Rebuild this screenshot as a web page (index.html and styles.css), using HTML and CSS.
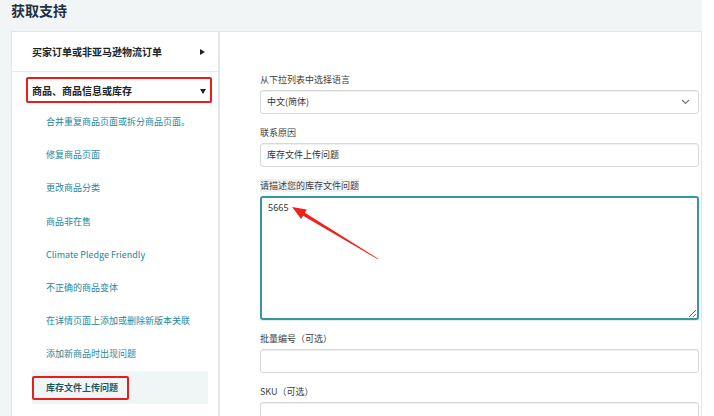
FILE: index.html
```html
<!DOCTYPE html>
<html lang="zh-CN">
<head>
<meta charset="utf-8">
<title>获取支持</title>
<link rel="stylesheet" href="styles.css">
</head>
<body>
<div class="page">
  <h1 class="title">获取支持</h1>
  <div class="main">
    <nav class="side">
      <div class="sec sec-closed"><span>买家订单或非亚马逊物流订单</span><span class="tri-right"></span></div>
      <div class="sec sec-open"><span>商品、商品信息或库存</span><span class="tri-down"></span></div>
      <ul class="sub">
        <li>合并重复商品页面或拆分商品页面。</li>
        <li>修复商品页面</li>
        <li>更改商品分类</li>
        <li>商品非在售</li>
        <li>Climate Pledge Friendly</li>
        <li>不正确的商品变体</li>
        <li>在详情页面上添加或删除新版本关联</li>
        <li>添加新商品时出现问题</li>
        <li class="active">库存文件上传问题</li>
      </ul>
    </nav>
    <section class="form">
      <div class="field">
        <div class="label">从下拉列表中选择语言</div>
        <div class="box select"><span>中文(简体)</span>
          <svg class="chev" width="9" height="6" viewBox="0 0 9 6"><path d="M1 1 L4.5 4.5 L8 1" fill="none" stroke="#6f7373" stroke-width="1.1"/></svg>
        </div>
      </div>
      <div class="field">
        <div class="label">联系原因</div>
        <div class="box">库存文件上传问题</div>
      </div>
      <div class="field">
        <div class="label label-hl"><span>请描述您的库存文件问题</span></div>
        <textarea class="area" readonly>5665</textarea>
      </div>
      <div class="field">
        <div class="label">批量编号（可选）</div>
        <div class="box"></div>
      </div>
      <div class="field">
        <div class="label">SKU（可选）</div>
        <div class="box"></div>
      </div>
    </section>
  </div>
  <div class="mark mark-1"></div>
  <div class="mark mark-2"></div>
  <svg class="arrow" width="714" height="416" viewBox="0 0 714 416">
    <polygon fill="#f0201c" points="292,207 306.8,209.5 304.9,212.7 378.2,258.7 377.8,259.3 303.1,215.7 301.2,218.9"/>
  </svg>
</div>
</body>
</html>
```

FILE: styles.css
```css
* { box-sizing: border-box; }

html, body {
  margin: 0;
  padding: 0;
  background: #ffffff;
}

body {
  font-family: "Noto Sans CJK SC", "Noto Sans", sans-serif;
  color: #2f3434;
}

.page {
  position: relative;
  width: 702px;
  height: 416px;
  background: #f2f5f6;
  overflow: hidden;
}

.title {
  margin: 0;
  height: 31px;
  padding-left: 11px;
  font-size: 14px;
  line-height: 20px;
  font-weight: 700;
  color: #232f3e;
}

.main {
  display: flex;
  padding-left: 11px;
  height: 385px;
}

.side {
  width: 208px;
  background: #ffffff;
  border: 1px solid #e3e6e6;
  border-bottom: none;
}

.sec {
  display: flex;
  justify-content: space-between;
  align-items: center;
  padding-left: 20px;
  padding-right: 12px;
  font-size: 10px;
  line-height: 12px;
  font-weight: 700;
  color: #1d2424;
}

.sec-closed {
  padding-top: 14px;
  padding-bottom: 13px;
  border-bottom: 1px solid #e7eaea;
}

.sec-open {
  padding-top: 13px;
  padding-bottom: 8px;
}

.tri-right {
  width: 0;
  height: 0;
  border-top: 3px solid transparent;
  border-bottom: 3px solid transparent;
  border-left: 5px solid #1d2424;
  margin-right: 1px;
}

.tri-down {
  width: 0;
  height: 0;
  border-left: 3px solid transparent;
  border-right: 3px solid transparent;
  border-top: 5px solid #1d2424;
}

.sub {
  list-style: none;
  margin: 0 10px 0 20px;
  padding: 0;
}

.sub li {
  height: 33.2px;
  display: flex;
  align-items: center;
  padding-left: 14px;
  font-size: 9px;
  color: #24879a;
  white-space: nowrap;
}

.sub li.active {
  background: #f0f5f6;
  font-weight: 700;
  color: #1f5560;
}

.form {
  flex: 1;
  background: #ffffff;
  border: 1px solid #e3e6e6;
  border-bottom: none;
  padding: 42px 2px 0 40px;
}

.field {
  margin-bottom: 13px;
}

.label {
  font-size: 9px;
  line-height: 12px;
  margin-bottom: 4px;
  color: #3b4040;
}

.label-hl span { background: #f0f2f2; }

.box {
  height: 24px;
  border: 1px solid #d5d9d9;
  border-radius: 3px;
  background: #ffffff;
  padding: 0 6px;
  font-size: 9px;
  line-height: 22px;
  color: #2f3434;
  box-shadow: inset 0 1px 0 #eef0f0;
}

.select {
  display: flex;
  justify-content: space-between;
  align-items: center;
}

.chev { margin-right: 2px; }

.area {
  display: block;
  width: 100%;
  height: 124px;
  margin: 0;
  border: 2px solid #3597a0;
  border-radius: 3px;
  padding: 4px 6px;
  font-family: "Noto Sans", "Noto Sans CJK SC", sans-serif;
  font-size: 9px;
  line-height: 12px;
  color: #2f3434;
  background: #ffffff;
  outline: none;
  resize: vertical;
  box-shadow: 0 1px 0 #e0eef0;
}

.mark {
  position: absolute;
  border: 2px solid #ea1c1c;
  border-radius: 2px;
}

.mark-1 {
  left: 26px;
  top: 77px;
  width: 186px;
  height: 26px;
}

.mark-2 {
  left: 32px;
  top: 376px;
  width: 97px;
  height: 24px;
}

.arrow {
  position: absolute;
  left: 0;
  top: 0;
  pointer-events: none;
}
```
